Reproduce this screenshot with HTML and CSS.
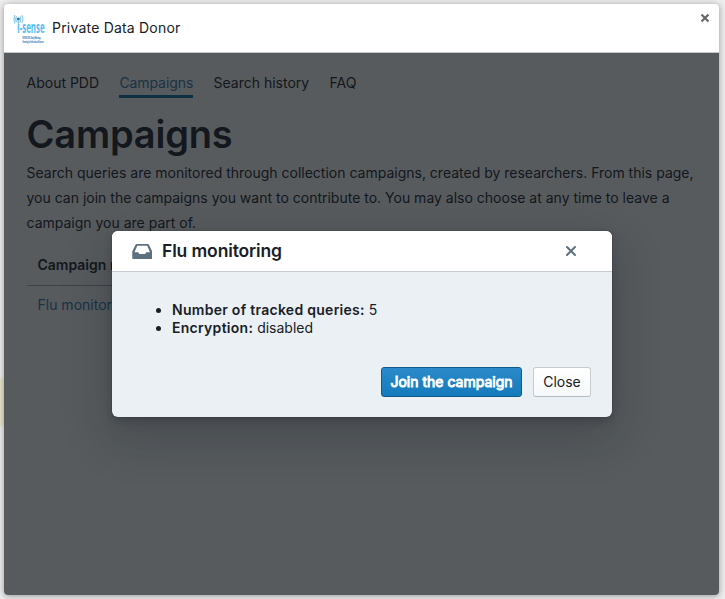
FILE: index.html
```html
<!DOCTYPE html>
<html lang="en">
<head>
<meta charset="utf-8">
<title>Private Data Donor</title>
<link rel="stylesheet" href="styles.css">
</head>
<body>
<div class="window">
  <header class="titlebar">
    <svg class="logo" viewBox="0 0 34 32" aria-label="i-sense">
      <g fill="none" stroke="#8fcdf0" stroke-width="1.200">
        <path d="M3.600 2.200Q1.800 5 3.600 8.200M1.800 1Q.2 5 1.800 9.600M7 2.200Q8.600 5 7 8.200M8.800 1.400Q11 5 8.800 9"/>
      </g>
      <circle cx="5.300" cy="5" r="1.500" fill="#2877ab"/>
      <path d="M5.300 6v10" stroke="#a9dcf6" stroke-width="1.200"/>
      <text class="logo-name" transform="translate(4.300 18.500) scale(1 2)">i-sense</text>
      <text class="logo-sub" transform="translate(9.500 25) scale(1 1.900)">EPSRC IRC Early-Warning</text>
      <text class="logo-sub" transform="translate(9.500 28.600) scale(1 1.900)">Sensing for Infectious Disease</text>
    </svg>
    <span class="app-name">Private Data Donor</span>
    <svg class="window-close" viewBox="0 0 10 10"><path d="M1.500 1.500l7 7M8.500 1.500l-7 7"/></svg>
  </header>
  <div class="page">
    <nav class="tabs">
      <a class="tab">About PDD</a>
      <a class="tab active">Campaigns</a>
      <a class="tab">Search history</a>
      <a class="tab">FAQ</a>
    </nav>
    <h1>Campaigns</h1>
    <p class="intro">Search queries are monitored through collection campaigns, created by researchers. From this page,<br>you can join the campaigns you want to contribute to. You may also choose at any time to leave a<br>campaign you are part of.</p>
    <div class="table">
      <div class="row head">Campaign name</div>
      <div class="row"><a class="link">Flu monitoring</a></div>
    </div>
    <div class="backdrop">
      <section class="dialog">
        <header class="dialog-header">
          <svg class="inbox" viewBox="0 0 20 15"><path fill-rule="evenodd" d="M4.400 0h11.200c.5 0 .8.2 1 .6L19.800 7c.1.2.2.4.2.7V14c0 .6-.4 1-1 1H1c-.6 0-1-.4-1-1V7.700c0-.3.1-.5.2-.7L3.400.6c.2-.4.5-.6 1-.6zM5 1.800L2.300 8.200h3.200c.4 0 .7.3.9.6L7 10h6l.5-1.200c.2-.3.500-.6.900-.6h3.300L15 1.800z"/></svg>
          <h2>Flu monitoring</h2>
          <svg class="dialog-close" viewBox="0 0 12 12"><path d="M2 2l8 8M10 2l-8 8"/></svg>
        </header>
        <ul class="facts">
          <li><b>Number of tracked queries:</b> 5</li>
          <li><b>Encryption:</b> disabled</li>
        </ul>
        <footer class="actions">
          <button class="button primary">Join the campaign</button>
          <button class="button">Close</button>
        </footer>
      </section>
    </div>
  </div>
</div>
</body>
</html>
```
FILE: styles.css
```css
* { box-sizing: border-box; }
body {
  margin: 0;
  height: 599px;
  padding: 4px 6px 4px 4px;
  overflow: hidden;
  background: linear-gradient(#0000 376px, #e9e8cc 380px, #e9e8cc 424px, #0000 428px) 0 0 / 4px 599px no-repeat, #eee;
  font: 14px/18px Inter, "Liberation Sans", sans-serif;
  color: #182026;
}
.window {
  height: 591px;
  display: flex;
  flex-direction: column;
  border-radius: 4px;
  overflow: hidden;
  background: #fff;
  box-shadow: 0 1px 7px rgba(0, 0, 0, .38);
}
.titlebar {
  height: 49px;
  flex: none;
  display: flex;
  align-items: center;
  padding: 0 9px 0 8.500px;
  border-bottom: 1px solid #c4c6c7;
}
.logo { width: 34px; height: 32px; margin-top: 4px; overflow: visible; }
.logo-name { font: 700 7.900px "Open Sans", sans-serif; fill: #58bdf0; }
.logo-sub { font: bold 1.450px "Liberation Sans", sans-serif; fill: #6b9ccc; stroke: #6b9ccc; stroke-width: .12; }
.app-name { margin-left: 5.500px; flex: 1; letter-spacing: .2px; }
.window-close { width: 10px; height: 10px; align-self: flex-start; margin-top: 9px; }
.window-close path { stroke: #686868; stroke-width: 2.200; }
.page { flex: 1; position: relative; padding: 15px 23px 15px 22.500px; }
.tabs { display: flex; gap: 20.300px; }
.tab { height: 30px; line-height: 30px; }
.tab.active { color: #3577a8; border-bottom: 3px solid #106ba3; letter-spacing: -.08px; }
h1 { margin: 15px 0 0; font-size: 38px; line-height: 42px; font-weight: 600; letter-spacing: -.2px; }
.intro { margin: 5px 0 0; line-height: 25px; white-space: nowrap; }
.table { width: 180px; margin-top: 10px; }
.row { height: 39px; line-height: 38px; padding-left: 11px; }
.row.head { height: 41px; line-height: 40px; font-weight: 600; border-bottom: 1px solid #c5cbd0; }
.row.head { border-bottom-color: #a9aeb2; }
.link { color: #3577a8; }
.backdrop {
  position: absolute;
  inset: 0;
  padding: 178px 107px 0 108px;
  background: rgba(16, 22, 26, .7);
}
.dialog {
  height: 186px;
  border-radius: 6px;
  background: #ebf0f4;
  box-shadow: 0 0 0 1px rgba(16, 22, 26, .1), 0 4px 8px rgba(16, 22, 26, .2), 0 18px 46px 6px rgba(16, 22, 26, .2);
}
.dialog-header {
  height: 41px;
  display: flex;
  align-items: center;
  padding: 0 35.500px 0 19.500px;
  background: #fff;
  border-bottom: 1px solid #c5cbd0;
  border-radius: 6px 6px 0 0;
}
.inbox { width: 20.500px; height: 15px; fill: #5c7080; }
h2 { flex: 1; margin: 0 0 0 10px; font-size: 17.500px; line-height: 20px; font-weight: 600; letter-spacing: -.13px; }
.dialog-close { width: 12px; height: 12px; }
.dialog-close path { stroke: #5c7080; stroke-width: 2; stroke-linecap: round; }
.facts { margin: 29px 0 0; padding-left: 60px; }
.facts b { font-weight: 600; letter-spacing: .28px; }
.actions { display: flex; justify-content: flex-end; gap: 11px; padding: 30px 21px 0 0; }
.button {
  width: 58px;
  height: 30px;
  padding: 0;
  border: 1px solid #c5cbd0;
  border-bottom-color: #b5bcc1;
  border-radius: 3px;
  background: linear-gradient(#fff, #f5f8fa);
  color: #182026;
  font: inherit;
  white-space: nowrap;
}
.button.primary {
  width: 141px;
  border-color: #10598b;
  background: linear-gradient(#2b8aca, #147abc);
  color: #fff;
  -webkit-text-stroke: .9px #fff;
}
```
